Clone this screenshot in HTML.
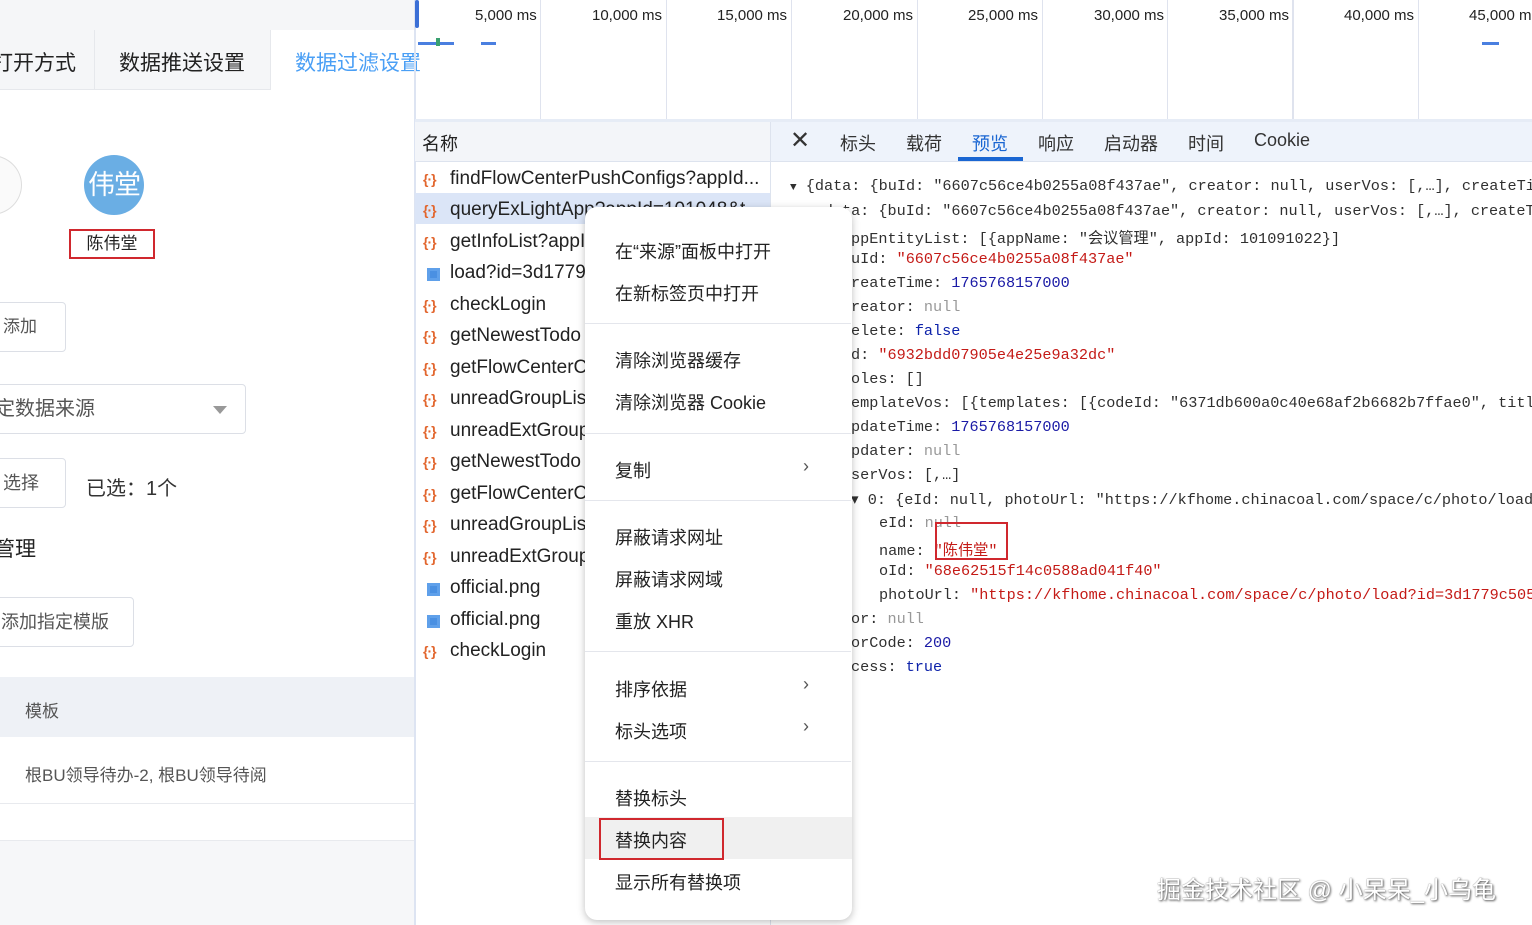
<!DOCTYPE html>
<html><head><meta charset="utf-8">
<style>
*{margin:0;padding:0;box-sizing:border-box}
body{width:1532px;height:925px;overflow:hidden;background:#fff;position:relative;font-family:"Liberation Sans","Noto Sans CJK SC",sans-serif;color:#222}
.a{position:absolute;white-space:nowrap}
.mono{font-family:"Liberation Mono","Noto Sans CJK SC",monospace;font-size:15.2px;color:#303030}
.str{color:#c41a16}.num{color:#1a1aa6}.nul{color:#999}.kw{color:#0d22aa}
.row{position:absolute;left:415px;width:355px;height:31px;font-size:19px;color:#222}
.row span.t{position:absolute;left:35px;top:6px}
.ic{position:absolute;left:8px;top:9px;font-size:14px;color:#e2662e;font-weight:bold;letter-spacing:-1px}
.pic{position:absolute;left:12px;top:12px;width:13px;height:13px;background:#4a90e2;border:3px solid #5fa0ea}
.mi{position:absolute;left:30px;font-size:18px;color:#222}
.sep{position:absolute;left:0;width:266px;height:1px;background:#e4e6ec}
.chev{position:absolute;left:218px;font-size:18px;color:#555}
</style></head><body>

<div class="a" style="left:0;top:0;width:414px;height:30px;background:#f5f6f8"></div>
<div class="a" style="left:0;top:30px;width:95px;height:60px;background:#f5f6f8;border-right:1px solid #e6e8ec;border-bottom:1px solid #e6e8ec"></div>
<div class="a" style="left:95px;top:30px;width:176px;height:60px;background:#f5f6f8;border-right:1px solid #e6e8ec;border-bottom:1px solid #e6e8ec"></div>
<div class="a" style="left:-8px;top:47px;font-size:21px;color:#222">打开方式</div>
<div class="a" style="left:119px;top:47px;font-size:21px;color:#222">数据推送设置</div>
<div class="a" style="left:295px;top:47px;font-size:21px;color:#4a9ff5">数据过滤设置</div>

<div class="a" style="left:-40px;top:155px;width:62px;height:60px;border-radius:50%;border:1px solid #ddd;background:#fafafa"></div>
<div class="a" style="left:84px;top:155px;width:60px;height:60px;border-radius:50%;background:#6aaee4;color:#fff;font-size:27px;line-height:60px;text-align:center;letter-spacing:-1px">伟堂</div>
<div class="a" style="left:69px;top:229px;width:86px;height:30px;border:2px solid #d0282e;font-size:17px;text-align:center;line-height:26px">陈伟堂</div>

<div class="a" style="left:-6px;top:302px;width:72px;height:50px;border:1px solid #dcdfe6;border-radius:4px;font-size:17px;line-height:48px;padding-left:8px;color:#555">添加</div>
<div class="a" style="left:-6px;top:384px;width:252px;height:50px;border:1px solid #dcdfe6;border-radius:4px;font-size:20px;line-height:48px;color:#555">定数据来源</div>
<div class="a" style="left:213px;top:406px;width:0;height:0;border-left:7px solid transparent;border-right:7px solid transparent;border-top:8px solid #999"></div>
<div class="a" style="left:-6px;top:458px;width:72px;height:50px;border:1px solid #dcdfe6;border-radius:4px;font-size:18px;line-height:48px;padding-left:8px;color:#555">选择</div>
<div class="a" style="left:86px;top:472px;font-size:20px;color:#333">已选：1个</div>
<div class="a" style="left:-6px;top:533px;font-size:21px;color:#222">管理</div>
<div class="a" style="left:-6px;top:597px;width:140px;height:50px;border:1px solid #dcdfe6;border-radius:4px;font-size:18px;line-height:48px;padding-left:6px;color:#555">添加指定模版</div>
<div class="a" style="left:0;top:677px;width:414px;height:60px;background:#eef1f6"></div>
<div class="a" style="left:25px;top:697px;font-size:17px;color:#555">模板</div>
<div class="a" style="left:0;top:803px;width:414px;height:1px;background:#e8eaee"></div>
<div class="a" style="left:25px;top:761px;font-size:17px;color:#555">根BU领导待办-2, 根BU领导待阅</div>
<div class="a" style="left:0;top:840px;width:414px;height:85px;background:#f6f7f9;border-top:1px solid #e8eaee"></div>

<div class="a" style="left:414px;top:0;width:2px;height:925px;background:#dde4f2"></div>
<div class="a" style="left:415px;top:0;width:4px;height:28px;background:#3b6fd6;border-radius:2px"></div>
<div class="a" style="left:415px;top:119px;width:1117px;height:3px;background:#e6ecf6"></div>
<div class="a" style="left:540px;top:0;width:1px;height:119px;background:#dfe3ee"></div>
<div class="a" style="left:666px;top:0;width:1px;height:119px;background:#dfe3ee"></div>
<div class="a" style="left:791px;top:0;width:1px;height:119px;background:#dfe3ee"></div>
<div class="a" style="left:917px;top:0;width:1px;height:119px;background:#dfe3ee"></div>
<div class="a" style="left:1042px;top:0;width:1px;height:119px;background:#dfe3ee"></div>
<div class="a" style="left:1167px;top:0;width:1px;height:119px;background:#dfe3ee"></div>
<div class="a" style="left:1292px;top:0;width:2px;height:119px;background:#dfe3ee"></div>
<div class="a" style="left:1418px;top:0;width:1px;height:119px;background:#dfe3ee"></div>
<div class="a" style="left:475px;top:7px;font-size:15px;color:#222">5,000 ms</div>
<div class="a" style="left:592px;top:7px;font-size:15px;color:#222">10,000 ms</div>
<div class="a" style="left:717px;top:7px;font-size:15px;color:#222">15,000 ms</div>
<div class="a" style="left:843px;top:7px;font-size:15px;color:#222">20,000 ms</div>
<div class="a" style="left:968px;top:7px;font-size:15px;color:#222">25,000 ms</div>
<div class="a" style="left:1094px;top:7px;font-size:15px;color:#222">30,000 ms</div>
<div class="a" style="left:1219px;top:7px;font-size:15px;color:#222">35,000 ms</div>
<div class="a" style="left:1344px;top:7px;font-size:15px;color:#222">40,000 ms</div>
<div class="a" style="left:1469px;top:7px;font-size:15px;color:#222">45,000 m</div>
<div class="a" style="left:418px;top:42px;width:36px;height:3px;background:#4a7fe0"></div>
<div class="a" style="left:436px;top:38px;width:4px;height:8px;background:#3aa070"></div>
<div class="a" style="left:481px;top:42px;width:15px;height:3px;background:#4a7fe0"></div>
<div class="a" style="left:1482px;top:42px;width:17px;height:3px;background:#4a7fe0"></div>

<div class="a" style="left:415px;top:122px;width:355px;height:40px;background:#f3f5f9;border-bottom:1px solid #dde3ee"></div>
<div class="a" style="left:422px;top:130px;font-size:18px;color:#222">名称</div>
<div class="a" style="left:770px;top:122px;width:1px;height:803px;background:#dde3ee"></div>

<div class="row" style="top:162px"><span class="ic">{·}</span><span class="t">findFlowCenterPushConfigs?appId...</span></div>
<div class="row" style="top:193px;background:#dbe5f7"><span class="ic">{·}</span><span class="t">queryExLightApp?appId=101048&amp;t</span></div>
<div class="row" style="top:225px"><span class="ic">{·}</span><span class="t">getInfoList?appId</span></div>
<div class="row" style="top:256px"><span class="pic"></span><span class="t">load?id=3d1779c</span></div>
<div class="row" style="top:288px"><span class="ic">{·}</span><span class="t">checkLogin</span></div>
<div class="row" style="top:319px"><span class="ic">{·}</span><span class="t">getNewestTodo</span></div>
<div class="row" style="top:351px"><span class="ic">{·}</span><span class="t">getFlowCenterC</span></div>
<div class="row" style="top:382px"><span class="ic">{·}</span><span class="t">unreadGroupList</span></div>
<div class="row" style="top:414px"><span class="ic">{·}</span><span class="t">unreadExtGroup</span></div>
<div class="row" style="top:445px"><span class="ic">{·}</span><span class="t">getNewestTodo</span></div>
<div class="row" style="top:477px"><span class="ic">{·}</span><span class="t">getFlowCenterC</span></div>
<div class="row" style="top:508px"><span class="ic">{·}</span><span class="t">unreadGroupList</span></div>
<div class="row" style="top:540px"><span class="ic">{·}</span><span class="t">unreadExtGroup</span></div>
<div class="row" style="top:571px"><span class="pic"></span><span class="t">official.png</span></div>
<div class="row" style="top:603px"><span class="pic"></span><span class="t">official.png</span></div>
<div class="row" style="top:634px"><span class="ic">{·}</span><span class="t">checkLogin</span></div>

<div class="a" style="left:771px;top:122px;width:761px;height:40px;background:#eef3fb;border-bottom:1px solid #dde3ee"></div>
<div class="a" style="left:790px;top:126px;font-size:24px;color:#333">✕</div>
<div class="a" style="left:840px;top:130px;font-size:18px;color:#333">标头</div>
<div class="a" style="left:906px;top:130px;font-size:18px;color:#333">载荷</div>
<div class="a" style="left:972px;top:130px;font-size:18px;color:#1a66d2">预览</div>
<div class="a" style="left:958px;top:157px;width:65px;height:4px;background:#1a66d2"></div>
<div class="a" style="left:1038px;top:130px;font-size:18px;color:#333">响应</div>
<div class="a" style="left:1104px;top:130px;font-size:18px;color:#333">启动器</div>
<div class="a" style="left:1188px;top:130px;font-size:18px;color:#333">时间</div>
<div class="a" style="left:1254px;top:130px;font-size:18px;color:#333">Cookie</div>

<div class="a mono" style="left:790px;top:177px"><span style="font-size:11px">▼</span> {data: {buId: "6607c56ce4b0255a08f437ae", creator: null, userVos: [,…], createTi</div>
<div class="a mono" style="left:808px;top:202px"><span style="font-size:11px">▼</span> data: {buId: "6607c56ce4b0255a08f437ae", creator: null, userVos: [,…], createT</div>
<div class="a mono" style="left:851px;top:226px">ppEntityList: [{appName: "会议管理", appId: 101091022}]</div>
<div class="a mono" style="left:851px;top:250px">uId: <span class="str">"6607c56ce4b0255a08f437ae"</span></div>
<div class="a mono" style="left:851px;top:274px">reateTime: <span class="num">1765768157000</span></div>
<div class="a mono" style="left:851px;top:298px">reator: <span class="nul">null</span></div>
<div class="a mono" style="left:851px;top:322px">elete: <span class="kw">false</span></div>
<div class="a mono" style="left:851px;top:346px">d: <span class="str">"6932bdd07905e4e25e9a32dc"</span></div>
<div class="a mono" style="left:851px;top:370px">oles: []</div>
<div class="a mono" style="left:851px;top:394px">emplateVos: [{templates: [{codeId: "6371db600a0c40e68af2b6682b7ffae0", title</div>
<div class="a mono" style="left:851px;top:418px">pdateTime: <span class="num">1765768157000</span></div>
<div class="a mono" style="left:851px;top:442px">pdater: <span class="nul">null</span></div>
<div class="a mono" style="left:851px;top:466px">serVos: [,…]</div>
<div class="a mono" style="left:851px;top:490px">▾ 0: {eId: null, photoUrl: "https://kfhome.chinacoal.com/space/c/photo/load?i</div>
<div class="a mono" style="left:879px;top:514px">eId: <span class="nul">null</span></div>
<div class="a mono" style="left:879px;top:538px">name: <span class="str">"陈伟堂"</span></div>
<div class="a" style="left:935px;top:522px;width:73px;height:38px;border:2px solid #d0282e"></div>
<div class="a mono" style="left:879px;top:562px">oId: <span class="str">"68e62515f14c0588ad041f40"</span></div>
<div class="a mono" style="left:879px;top:586px">photoUrl: <span class="str">"https://kfhome.chinacoal.com/space/c/photo/load?id=3d1779c5052</span></div>
<div class="a mono" style="left:851px;top:610px">or: <span class="nul">null</span></div>
<div class="a mono" style="left:851px;top:634px">orCode: <span class="num">200</span></div>
<div class="a mono" style="left:851px;top:658px">cess: <span class="kw">true</span></div>

<div class="a" style="left:585px;top:207px;width:267px;height:713px;background:#fff;border-radius:12px;box-shadow:0 2px 8px rgba(0,0,0,.25)">
  <div class="mi" style="top:31px">在“来源”面板中打开</div>
  <div class="mi" style="top:73px">在新标签页中打开</div>
  <div class="sep" style="top:116px"></div>
  <div class="mi" style="top:140px">清除浏览器缓存</div>
  <div class="mi" style="top:182px">清除浏览器 Cookie</div>
  <div class="sep" style="top:226px"></div>
  <div class="mi" style="top:250px">复制</div><div class="chev" style="top:249px">›</div>
  <div class="sep" style="top:293px"></div>
  <div class="mi" style="top:317px">屏蔽请求网址</div>
  <div class="mi" style="top:359px">屏蔽请求网域</div>
  <div class="mi" style="top:401px">重放 XHR</div>
  <div class="sep" style="top:444px"></div>
  <div class="mi" style="top:469px">排序依据</div><div class="chev" style="top:467px">›</div>
  <div class="mi" style="top:511px">标头选项</div><div class="chev" style="top:509px">›</div>
  <div class="sep" style="top:554px"></div>
  <div class="mi" style="top:578px">替换标头</div>
  <div style="position:absolute;left:0;top:610px;width:267px;height:42px;background:#f0f0f0"></div>
  <div class="mi" style="top:620px">替换内容</div>
  <div style="position:absolute;left:14px;top:611px;width:125px;height:42px;border:2px solid #d0282e"></div>
  <div class="mi" style="top:662px">显示所有替换项</div>
</div>

<div class="a" style="left:1157px;top:870px;font-size:24px;color:#fff;text-shadow:1px 1px 2px #555,0 0 1px #666">掘金技术社区 @ 小呆呆_小乌龟</div>
</body></html>
